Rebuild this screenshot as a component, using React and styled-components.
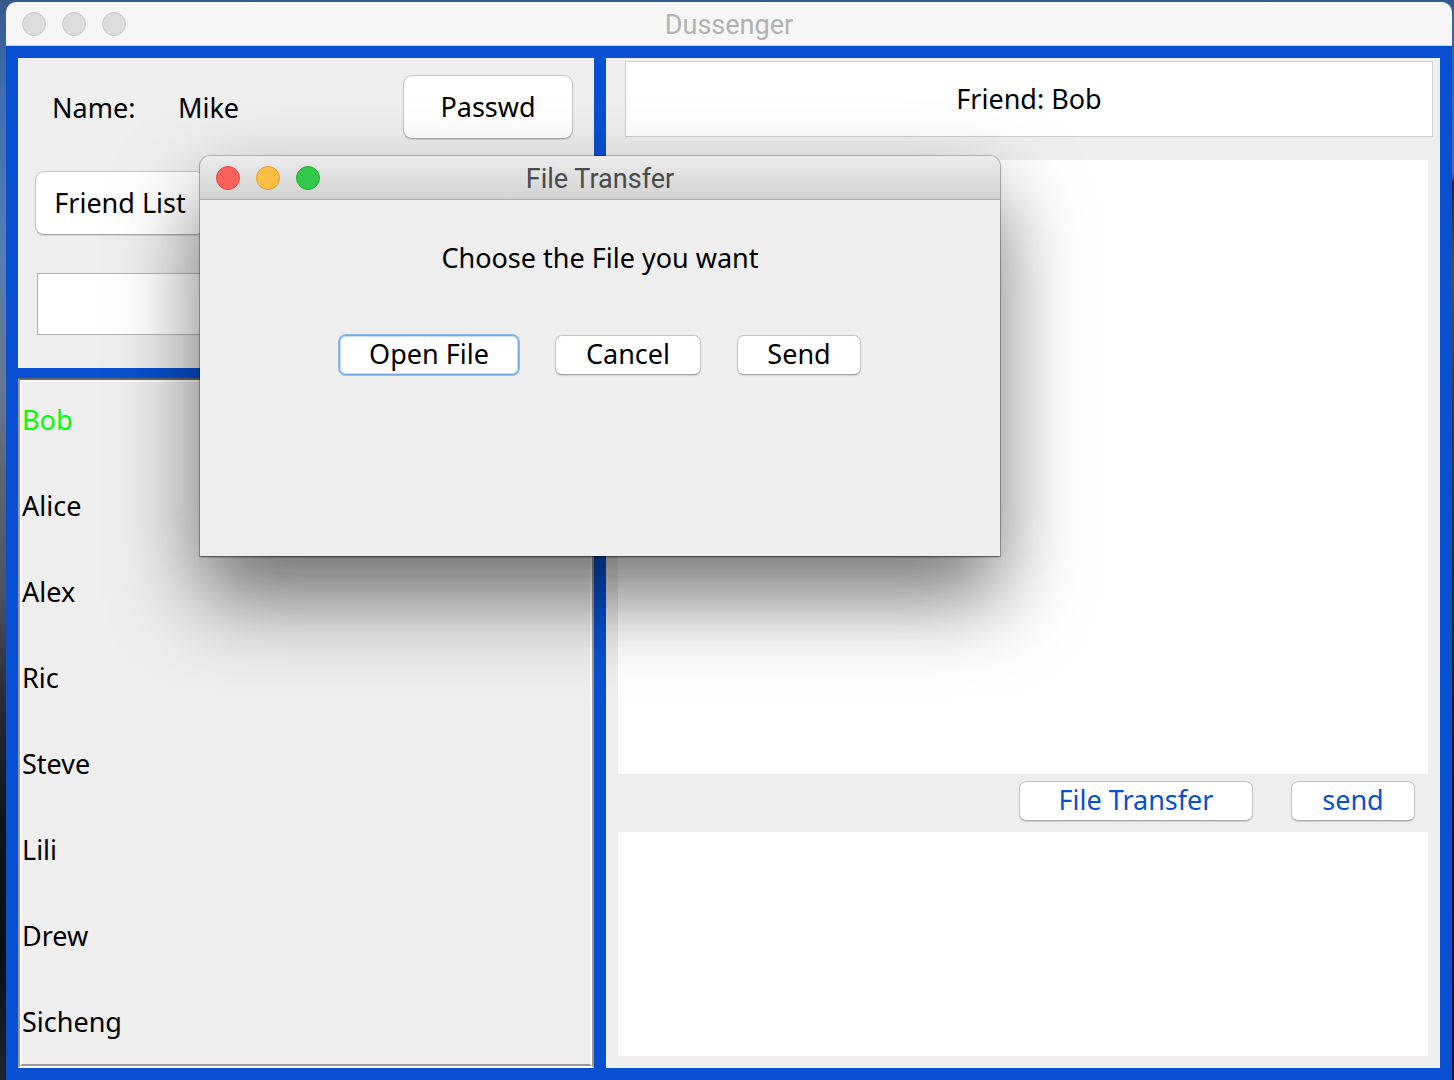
import React from 'react';
import styled, { createGlobalStyle, css } from 'styled-components';

const GlobalStyle = createGlobalStyle`
  *, *::before, *::after { box-sizing: border-box; }
  body {
    margin: 0;
    font: 27px/32px "Noto Sans", "Open Sans", sans-serif;
    color: #000;
  }
  button, input, textarea { font: inherit; color: inherit; }
`;

const BLUE = '#084fd1';
const PANEL = '#eeeeee';

const Desktop = styled.div`
  position: relative;
  display: flex;
  min-height: 100vh;
  padding: 2px 2px 0 6px;
  background:
    linear-gradient(#2f5f98, #4c7096 16%, #2a2322 17%, #5e4a40 25%, #3c3a3a 36%, #26262a 52%, #0f0f12 80%, #15171f) right / 2px 100% no-repeat,
    linear-gradient(#355a8c, #3f6cad 8%, #5a7db4 24%, #66788f 36%, #5c6672 44%, #4a5264 55%, #2c2e36 64%, #131519 75%, #0c0e12 88%, #22222c);
`;

const MainWindow = styled.main`
  flex: 1;
  display: flex;
  flex-direction: column;
  min-width: 0;
  border-radius: 10px 10px 0 0;
  overflow: hidden;
  background: ${BLUE};
`;

const TitleBar = styled.header`
  position: relative;
  display: flex;
  align-items: center;
  justify-content: center;
  height: 44px;
  border-bottom: 1px solid ${(p) => (p.$active ? '#acacac' : '#d3d3d3')};
  background: ${(p) => (p.$active ? 'linear-gradient(#ececec, #d2d2d2)' : '#f6f6f6')};
`;

const Title = styled.h1`
  margin: 0;
  padding-top: 2px;
  font: 400 27px/42px Roboto, Inter, sans-serif;
  color: ${(p) => (p.$active ? '#4a4a4a' : '#b2b2b2')};
`;

const Lights = styled.div`
  position: absolute;
  left: 16px;
  top: 10px;
  display: flex;
  gap: 16px;
`;

const Light = styled.button`
  width: 24px;
  height: 24px;
  padding: 0;
  border: 1px solid ${(p) => p.$edge};
  border-radius: 50%;
  background: ${(p) => p.$fill};
`;

const Body = styled.div`
  flex: 1;
  display: grid;
  grid-template-columns: 576fr 834fr;
  gap: 12px;
  padding: 12px;
`;

const Sidebar = styled.div`
  display: flex;
  flex-direction: column;
  gap: 10px;
`;

const Account = styled.section`
  display: flex;
  flex-direction: column;
  align-items: flex-start;
  gap: 32px;
  height: 310px;
  padding: 17px 21px 0 17px;
  background: ${PANEL};
`;

const Identity = styled.dl`
  display: flex;
  align-items: center;
  align-self: stretch;
  margin: 0;
  padding-left: 17px;

  dt { width: 126px; padding-top: 2px; }
  dd { margin: 0; padding-top: 2px; flex: 1; }
`;

const Button = styled.button`
  height: 40px;
  padding: 0 0 2px;
  width: ${(p) => p.$width}px;
  border: 1px solid #c3c3c3;
  border-bottom-color: #a9a9a9;
  border-radius: 7px;
  background: #fff;
  box-shadow: 0 1px 1px rgba(0, 0, 0, 0.12);
  color: ${(p) => (p.$accent ? BLUE : '#000')};

  ${(p) => p.$tall && css`
    height: 64px;
    padding: 0;
    border-radius: 9px;
  `}

  &:focus-visible { outline: none; }

  ${(p) => p.$primary && css`
    border-color: #74a9e6;
    box-shadow: 0 0 0 1px #8fbdf0, inset 0 0 0 1px #c3dcf8;
  `}
`;

const SearchField = styled.input`
  width: 400px;
  height: 62px;
  margin: 6px 0 0 2px;
  border: 1px solid #b4b4b4;
  background: #fff;
`;

const ListFrame = styled.section`
  flex: 1;
  border: 2px solid #999;
  border-top-color: #666;
  border-bottom-color: #fff;
  background: ${PANEL};
`;

const FriendList = styled.ul`
  display: flex;
  flex-direction: column;
  gap: 10px;
  height: 100%;
  margin: 0;
  padding: 0;
  border: 2px solid #fff;
  border-bottom-color: #999;
  list-style: none;
`;

const Friend = styled.li`
  line-height: 76px;
  color: ${(p) => (p.$online ? '#00ff00' : '#000')};
`;

const Conversation = styled.section`
  display: flex;
  flex-direction: column;
  padding: 3px 12px 12px;
  background: ${PANEL};
`;

const FriendField = styled.input`
  height: 76px;
  margin: 0 -5px 23px 7px;
  padding: 0 2px 2px;
  border: 1px solid #d0d0d0;
  background: #fff;
  text-align: center;
`;

const History = styled.div`
  flex: 1;
  background: #fff;
`;

const Actions = styled.div`
  display: flex;
  justify-content: flex-end;
  gap: 38px;
  padding: 7px 13px 11px;
`;

const Message = styled.textarea`
  display: block;
  width: 100%;
  height: 224px;
  border: 0;
  background: #fff;
  resize: none;
`;

const Dialog = styled.section`
  position: absolute;
  left: 200px;
  top: 156px;
  width: 800px;
  height: 400px;
  border-radius: 10px 10px 0 0;
  background: ${PANEL};
  box-shadow: 0 0 0 1px rgba(0, 0, 0, 0.18), 0 1px 2px rgba(0, 0, 0, 0.5), 0 42px 84px rgba(0, 0, 0, 0.54);

  ${TitleBar} { border-radius: 10px 10px 0 0; }
`;

const Prompt = styled.p`
  margin: 42px 0 61px;
  text-align: center;
`;

const DialogActions = styled.div`
  display: flex;
  justify-content: center;
  gap: 36px;
`;

const friends = ['Bob', 'Alice', 'Alex', 'Ric', 'Steve', 'Lili', 'Drew', 'Sicheng'];

const GREY = [['#dddddd', '#c8c8c8'], ['#dddddd', '#c8c8c8'], ['#dddddd', '#c8c8c8']];
const COLOURED = [['#fc615c', '#df4744'], ['#fdbe41', '#de9f34'], ['#34c84a', '#27aa35']];
const LABELS = ['Close', 'Minimize', 'Zoom'];

function WindowBar({ title, active }) {
  return (
    <TitleBar $active={active}>
      <Lights>
        {(active ? COLOURED : GREY).map(([fill, edge], i) => (
          <Light key={LABELS[i]} type="button" aria-label={LABELS[i]} $fill={fill} $edge={edge} />
        ))}
      </Lights>
      <Title $active={active}>{title}</Title>
    </TitleBar>
  );
}

export default function App() {
  return (
    <>
      <GlobalStyle />
      <Desktop>
        <MainWindow>
          <WindowBar title="Dussenger" />
          <Body>
            <Sidebar>
              <Account>
                <Identity>
                  <dt>Name:</dt>
                  <dd>Mike</dd>
                  <Button type="button" $tall $width={170}>Passwd</Button>
                </Identity>
                <Button type="button" $tall $width={170}>Friend List</Button>
                <SearchField type="text" aria-label="Friend name" />
              </Account>
              <ListFrame>
                <FriendList>
                  {friends.map((name) => (
                    <Friend key={name} $online={name === 'Bob'}>{name}</Friend>
                  ))}
                </FriendList>
              </ListFrame>
            </Sidebar>
            <Conversation>
              <FriendField type="text" readOnly value="Friend: Bob" aria-label="Current friend" />
              <History role="log" aria-label="Conversation" />
              <Actions>
                <Button type="button" $accent $width={234}>File Transfer</Button>
                <Button type="button" $accent $width={124}>send</Button>
              </Actions>
              <Message aria-label="Message" />
            </Conversation>
          </Body>
        </MainWindow>
        <Dialog role="dialog" aria-label="File Transfer">
          <WindowBar title="File Transfer" active />
          <Prompt>Choose the File you want</Prompt>
          <DialogActions>
            <Button type="button" $primary $width={180}>Open File</Button>
            <Button type="button" $width={146}>Cancel</Button>
            <Button type="button" $width={124}>Send</Button>
          </DialogActions>
        </Dialog>
      </Desktop>
    </>
  );
}
